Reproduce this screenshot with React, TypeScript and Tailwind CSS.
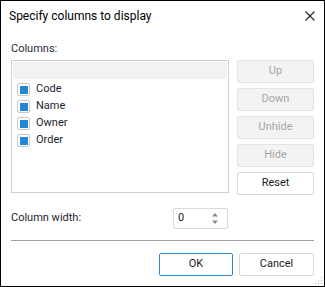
import React from "react";

const items = ["Code", "Name", "Owner", "Order"];

function SideButton({ label, enabled }: { label: string; enabled?: boolean }) {
  return (
    <div
      className={
        enabled
          ? "h-[23px] w-[77px] flex items-center justify-center rounded-[2px] border border-[#d9d9d9] bg-white text-[11px] text-[#1a1a1a]"
          : "h-[23px] w-[77px] flex items-center justify-center rounded-[2px] border border-[#e3e3e3] bg-[#f3f3f3] text-[11px] text-[#a6a6a6]"
      }
    >
      {label}
    </div>
  );
}

export default function App() {
  return (
    <div
      className="relative w-[325px] h-[287px] border border-black bg-white flex flex-col text-[#1a1a1a]"
      style={{ fontFamily: 'Roboto, "Noto Sans", sans-serif' }}
    >
      <div className="h-[30px] flex items-center justify-between pl-[8px] pr-[9px]">
        <span className="text-[12px] text-black">Specify columns to display</span>
        <svg width="10" height="10" viewBox="0 0 10 10">
          <path d="M0.5 0.5 L9.5 9.5 M9.5 0.5 L0.5 9.5" stroke="#222" strokeWidth="1.1" fill="none" />
        </svg>
      </div>
      <div className="px-[10px] flex flex-col">
        <div className="h-[16px] mt-[10px] text-[11px] leading-[16px] text-[#2b2b3b]">Columns:</div>
        <div className="mt-[3px] flex gap-[8px]">
          <div className="w-[219px] h-[133px] border border-[#cfcfcf] p-[1px] flex flex-col">
            <div className="h-[17px] bg-[#f2f2f2]" />
            <div className="mt-[2px] flex flex-col">
              {items.map((it) => (
                <div key={it} className="h-[17px] flex items-center pl-[4px]">
                  <div className="w-[13px] h-[13px] border border-[#c8c8c8] rounded-[2px] flex items-center justify-center bg-white">
                    <div className="w-[8px] h-[8px] bg-[#1f8ad2]" />
                  </div>
                  <span className="ml-[6px] text-[11px] text-[#1e1e2e]">{it}</span>
                </div>
              ))}
            </div>
          </div>
          <div className="flex flex-col gap-[5px]">
            <SideButton label="Up" />
            <SideButton label="Down" />
            <SideButton label="Unhide" />
            <SideButton label="Hide" />
            <SideButton label="Reset" enabled />
          </div>
        </div>
        <div className="mt-[13px] h-[21px] flex items-center">
          <span className="w-[162px] text-[11px] text-[#1e1e2e]">Column width:</span>
          <div className="w-[55px] h-[21px] border border-[#d9d9d9] rounded-[2px] flex items-center justify-between pl-[4px] pr-[9px]">
            <span className="text-[11px] text-[#1e1e2e]">0</span>
            <svg width="6" height="13" viewBox="0 0 6 13">
              <path d="M3 1 L6 4.5 L0 4.5 Z" fill="#8a8a8a" />
              <path d="M3 12 L6 8.5 L0 8.5 Z" fill="#8a8a8a" />
            </svg>
          </div>
        </div>
        <div className="mt-[11px] h-[1px] w-[303px] bg-[#a0a0a0]" />
        <div className="mt-[12px] flex justify-end gap-[6px]">
          <div className="h-[23px] w-[74px] flex items-center justify-center rounded-[2px] border border-[#2b8ad3] bg-white text-[11px] text-[#1a1a1a]">OK</div>
          <div className="h-[23px] w-[75px] flex items-center justify-center rounded-[2px] border border-[#d9d9d9] bg-white text-[11px] text-[#1a1a1a]">Cancel</div>
        </div>
      </div>
      <svg className="absolute right-[1px] bottom-[1px]" width="10" height="10" viewBox="0 0 10 10">
        <rect x="8" y="2" width="1" height="1" fill="#b8b8b8" />
        <rect x="5" y="5" width="1" height="1" fill="#b8b8b8" />
        <rect x="8" y="5" width="1" height="1" fill="#b8b8b8" />
        <rect x="2" y="8" width="1" height="1" fill="#b8b8b8" />
        <rect x="5" y="8" width="1" height="1" fill="#b8b8b8" />
        <rect x="8" y="8" width="1" height="1" fill="#b8b8b8" />
      </svg>
    </div>
  );
}
